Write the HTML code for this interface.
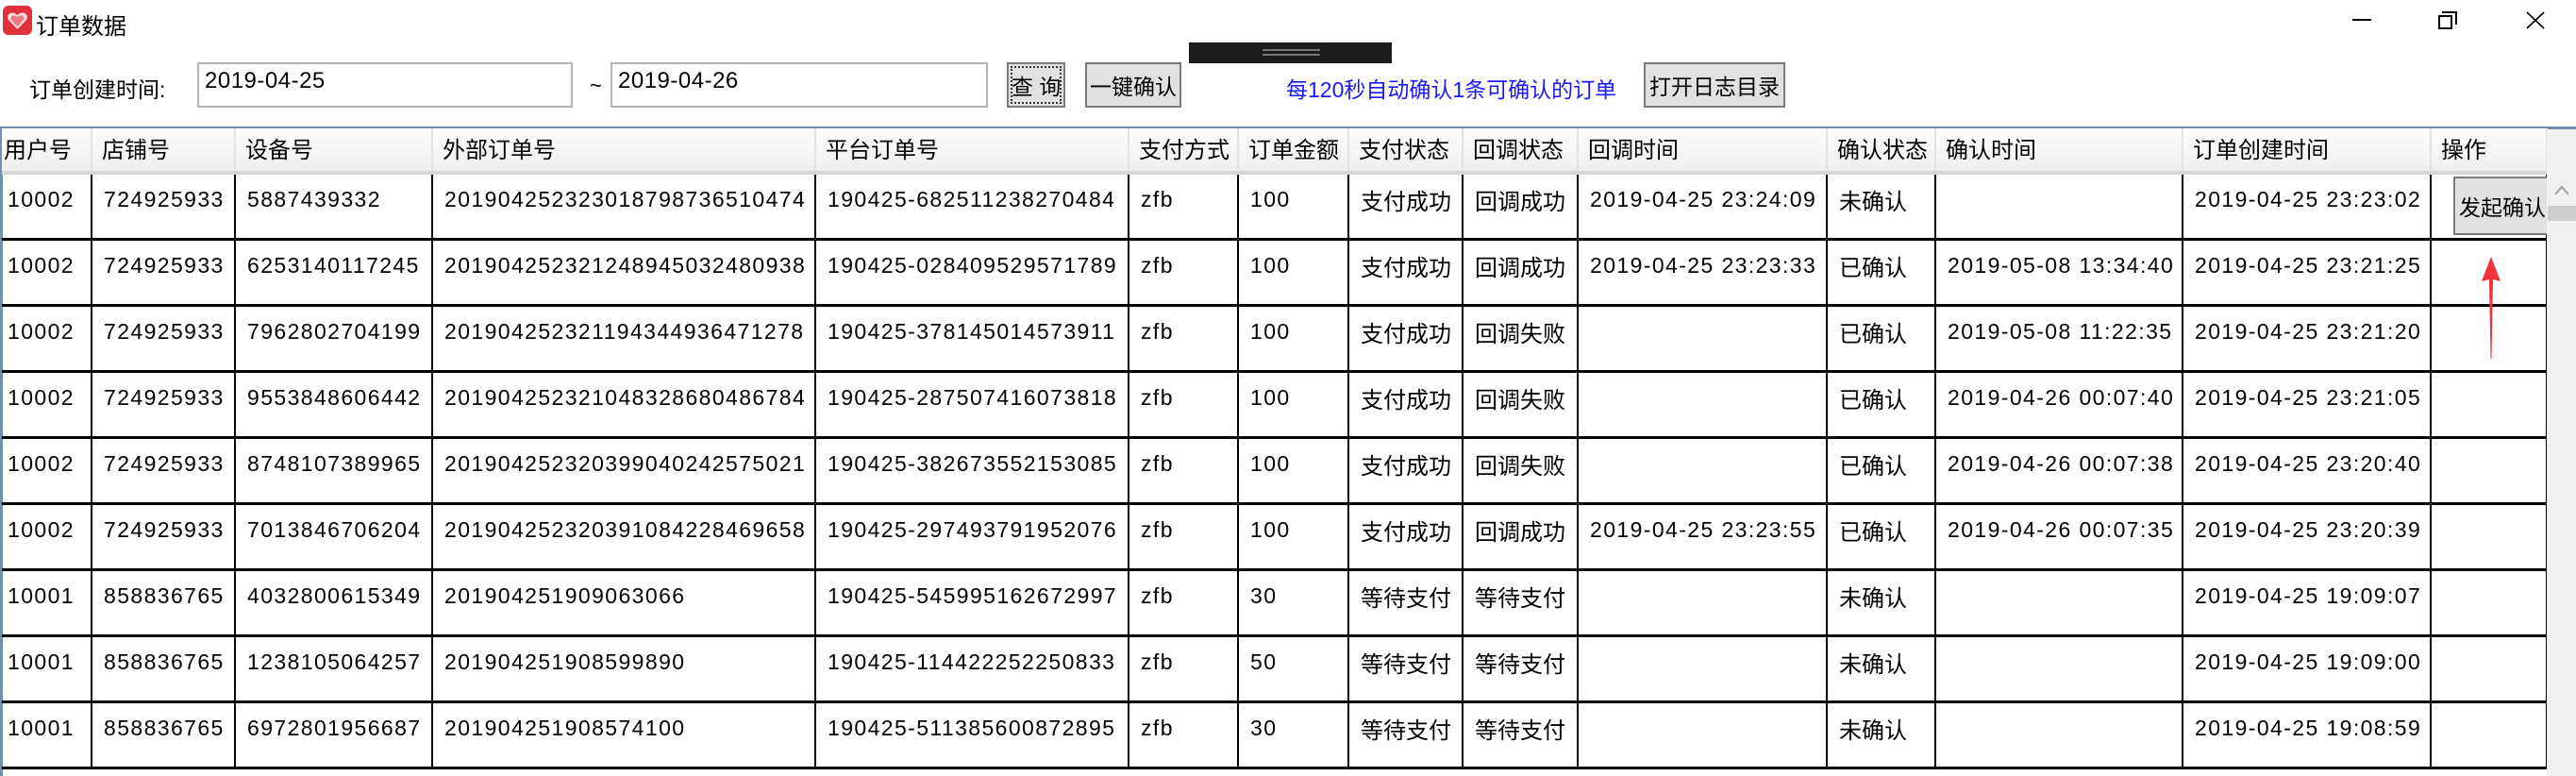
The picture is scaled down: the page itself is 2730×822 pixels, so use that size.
<!DOCTYPE html>
<html><head><meta charset="utf-8"><style>
*{margin:0;padding:0;box-sizing:border-box}
html,body{width:2730px;height:822px;overflow:hidden}
body{background:#fff;font-family:"Liberation Sans","Noto Sans CJK SC",sans-serif;color:#000;position:relative}
.a{position:absolute}
.btn{position:absolute;top:66px;height:48px;background:#e1e1e1;border:2px solid #7a7a7a;font-size:23px;display:flex;align-items:center;justify-content:center;white-space:nowrap}
.inp{position:absolute;top:66px;height:48px;border:2px solid #b4b4b4;font-size:24px;padding:4px 6px;letter-spacing:0.5px}
.wrap{position:absolute;left:0;top:0;width:2730px;height:822px;overflow:hidden}
table{position:absolute;left:2px;top:136px;border-collapse:collapse;table-layout:fixed;font-size:23px;letter-spacing:1.4px}
th{height:47px;background:linear-gradient(#fdfdfd,#eeeeee);border-right:2px solid #e2e2e2;border-bottom:4px solid #d6d6d6;text-align:left;font-weight:normal;padding:0 0 4px 10px;white-space:nowrap;overflow:hidden;letter-spacing:0;font-size:24px}
td{height:70px;border-right:2px solid #000;border-bottom:3px solid #000;padding:0 0 14px 12px;white-space:nowrap;overflow:hidden}
td.c{letter-spacing:0;font-size:24px}
</style></head><body><div class="wrap">
<div class="a" style="left:3px;top:6px;width:31px;height:31px;background:#e0303a;border-radius:6px"></div>
<svg class="a" style="left:7px;top:11px" width="23" height="22" viewBox="0 0 23 22"><path d="M11.5 20 L2 10 C-1 5 5 -1 11.5 5 C18 -1 24 5 21 10 Z" fill="#fff" opacity=".85"/><path d="M11.5 17 L5 10 C3 7 7 3 11.5 7 C16 3 20 7 18 10 Z" fill="#e0303a" opacity=".6"/></svg>
<div class="a" style="left:38px;top:8px;font-size:24px">订单数据</div>
<div class="a" style="left:2493px;top:20px;width:20px;height:2px;background:#000"></div>
<div class="a" style="left:2588px;top:12px;width:16px;height:14px;border:2px solid #000;border-left:none;border-bottom:none"></div>
<div class="a" style="left:2584px;top:16px;width:15px;height:15px;border:2px solid #000;background:#fff"></div>
<svg class="a" style="left:2677px;top:12px" width="20" height="19"><path d="M1 1 L19 18 M19 1 L1 18" stroke="#000" stroke-width="1.6"/></svg>

<div class="a" style="left:31px;top:76px;font-size:23px">订单创建时间:</div>
<div class="inp" style="left:209px;width:398px">2019-04-25</div>
<div class="a" style="left:625px;top:78px;font-size:22px">~</div>
<div class="inp" style="left:647px;width:400px">2019-04-26</div>
<div class="btn" style="left:1067px;width:62px"><div style="border:2px dotted #333;width:54px;height:40px;display:flex;align-items:center;justify-content:center">查 询</div></div>
<div class="btn" style="left:1150px;width:102px">一键确认</div>
<div class="a" style="left:1260px;top:45px;width:215px;height:22px;background:#1c1c1c"></div>
<div class="a" style="left:1338px;top:52px;width:61px;height:2px;background:#777"></div>
<div class="a" style="left:1338px;top:57px;width:61px;height:2px;background:#777"></div>
<div class="a" style="left:1363px;top:76px;font-size:23px;color:#1a1aff">每120秒自动确认1条可确认的订单</div>
<div class="btn" style="left:1742px;width:150px">打开日志目录</div>

<div class="a" style="left:0;top:134px;width:2730px;height:3px;background:#7090b0"></div>
<div class="a" style="left:0;top:134px;width:3px;height:688px;background:#7090b0"></div>

<table>
<colgroup><col style="width:95px"><col style="width:152px"><col style="width:209px"><col style="width:406px"><col style="width:332px"><col style="width:116px"><col style="width:117px"><col style="width:121px"><col style="width:122px"><col style="width:264px"><col style="width:115px"><col style="width:262px"><col style="width:263px"><col style="width:123px"></colgroup>
<tr><th style="padding-left:2px">用户号</th><th>店铺号</th><th>设备号</th><th>外部订单号</th><th>平台订单号</th><th>支付方式</th><th>订单金额</th><th>支付状态</th><th>回调状态</th><th>回调时间</th><th>确认状态</th><th>确认时间</th><th>订单创建时间</th><th>操作</th></tr>
<tr><td style="padding-left:6px">10002</td><td>724925933</td><td>5887439332</td><td>201904252323018798736510474</td><td>190425-682511238270484</td><td>zfb</td><td>100</td><td class="c">支付成功</td><td class="c">回调成功</td><td>2019-04-25 23:24:09</td><td class="c">未确认</td><td></td><td>2019-04-25 23:23:02</td><td></td></tr>
<tr><td style="padding-left:6px">10002</td><td>724925933</td><td>6253140117245</td><td>201904252321248945032480938</td><td>190425-028409529571789</td><td>zfb</td><td>100</td><td class="c">支付成功</td><td class="c">回调成功</td><td>2019-04-25 23:23:33</td><td class="c">已确认</td><td>2019-05-08 13:34:40</td><td>2019-04-25 23:21:25</td><td></td></tr>
<tr><td style="padding-left:6px">10002</td><td>724925933</td><td>7962802704199</td><td>201904252321194344936471278</td><td>190425-378145014573911</td><td>zfb</td><td>100</td><td class="c">支付成功</td><td class="c">回调失败</td><td></td><td class="c">已确认</td><td>2019-05-08 11:22:35</td><td>2019-04-25 23:21:20</td><td></td></tr>
<tr><td style="padding-left:6px">10002</td><td>724925933</td><td>9553848606442</td><td>201904252321048328680486784</td><td>190425-287507416073818</td><td>zfb</td><td>100</td><td class="c">支付成功</td><td class="c">回调失败</td><td></td><td class="c">已确认</td><td>2019-04-26 00:07:40</td><td>2019-04-25 23:21:05</td><td></td></tr>
<tr><td style="padding-left:6px">10002</td><td>724925933</td><td>8748107389965</td><td>201904252320399040242575021</td><td>190425-382673552153085</td><td>zfb</td><td>100</td><td class="c">支付成功</td><td class="c">回调失败</td><td></td><td class="c">已确认</td><td>2019-04-26 00:07:38</td><td>2019-04-25 23:20:40</td><td></td></tr>
<tr><td style="padding-left:6px">10002</td><td>724925933</td><td>7013846706204</td><td>201904252320391084228469658</td><td>190425-297493791952076</td><td>zfb</td><td>100</td><td class="c">支付成功</td><td class="c">回调成功</td><td>2019-04-25 23:23:55</td><td class="c">已确认</td><td>2019-04-26 00:07:35</td><td>2019-04-25 23:20:39</td><td></td></tr>
<tr><td style="padding-left:6px">10001</td><td>858836765</td><td>4032800615349</td><td>201904251909063066</td><td>190425-545995162672997</td><td>zfb</td><td>30</td><td class="c">等待支付</td><td class="c">等待支付</td><td></td><td class="c">未确认</td><td></td><td>2019-04-25 19:09:07</td><td></td></tr>
<tr><td style="padding-left:6px">10001</td><td>858836765</td><td>1238105064257</td><td>201904251908599890</td><td>190425-114422252250833</td><td>zfb</td><td>50</td><td class="c">等待支付</td><td class="c">等待支付</td><td></td><td class="c">未确认</td><td></td><td>2019-04-25 19:09:00</td><td></td></tr>
<tr><td style="padding-left:6px">10001</td><td>858836765</td><td>6972801956687</td><td>201904251908574100</td><td>190425-511385600872895</td><td>zfb</td><td>30</td><td class="c">等待支付</td><td class="c">等待支付</td><td></td><td class="c">未确认</td><td></td><td>2019-04-25 19:08:59</td><td></td></tr>
</table>
<div class="a" style="left:2699px;top:137px;width:31px;height:685px;background:#f0f0f0"></div>
<svg class="a" style="left:2707px;top:196px" width="16" height="12"><path d="M1 10 L8 2 L15 10" stroke="#a0a0a0" stroke-width="2" fill="none"/></svg>
<div class="a" style="left:2700px;top:218px;width:30px;height:16px;background:#cdcdcd"></div>
<div class="a" style="left:2600px;top:187px;width:99px;height:62px;background:#e1e1e1;border:2px solid #7a7a7a;border-right:none;font-size:23px;padding:12px 0 0 4px;white-space:nowrap;overflow:hidden">发起确认</div>
<svg class="a" style="left:2628px;top:270px" width="24" height="112"><path d="M12 2 L22 28 L14 26 L12.5 110 L11.5 110 L10 26 L2 28 Z" fill="#f0303a"/></svg>
</div></body></html>
